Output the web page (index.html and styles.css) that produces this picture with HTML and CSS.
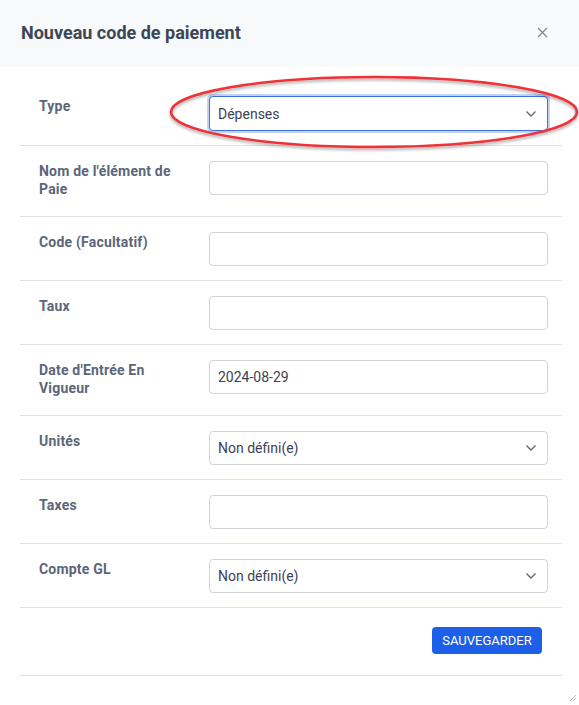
FILE: index.html
```html
<!DOCTYPE html>
<html lang="fr">
<head>
<meta charset="utf-8">
<link rel="stylesheet" href="styles.css">
</head>
<body>
<div class="modal">
  <div class="modal-header">
    <h1 class="title">Nouveau code de paiement</h1>
    <span class="close">
      <svg width="11" height="11" viewBox="0 0 11 11"><path d="M1 1L10 10M10 1L1 10" stroke="#7d8794" stroke-width="1.2" fill="none"/></svg>
    </span>
  </div>
  <div class="modal-body">
    <div class="row">
      <div class="label">Type</div>
      <div class="field select focused"><span>Dépenses</span><svg class="chev" width="12" height="8" viewBox="0 0 12 8"><path d="M1.5 1.5L6 6L10.5 1.5" stroke="#5f6b7a" stroke-width="1.4" fill="none"/></svg></div>
    </div>
    <div class="row">
      <div class="label">Nom de l'élément de Paie</div>
      <div class="field"></div>
    </div>
    <div class="row">
      <div class="label">Code (Facultatif)</div>
      <div class="field"></div>
    </div>
    <div class="row">
      <div class="label">Taux</div>
      <div class="field"></div>
    </div>
    <div class="row">
      <div class="label">Date d'Entrée En Vigueur</div>
      <div class="field"><span>2024-08-29</span></div>
    </div>
    <div class="row">
      <div class="label">Unités</div>
      <div class="field select"><span>Non défini(e)</span><svg class="chev" width="12" height="8" viewBox="0 0 12 8"><path d="M1.5 1.5L6 6L10.5 1.5" stroke="#5f6b7a" stroke-width="1.4" fill="none"/></svg></div>
    </div>
    <div class="row">
      <div class="label">Taxes</div>
      <div class="field"></div>
    </div>
    <div class="row">
      <div class="label">Compte GL</div>
      <div class="field select"><span>Non défini(e)</span><svg class="chev" width="12" height="8" viewBox="0 0 12 8"><path d="M1.5 1.5L6 6L10.5 1.5" stroke="#5f6b7a" stroke-width="1.4" fill="none"/></svg></div>
    </div>
    <div class="footer-row">
      <button class="btn">SAUVEGARDER</button>
    </div>
  </div>
  <svg class="annot" width="420" height="84" viewBox="0 0 420 84">
    <defs>
      <filter id="sh" x="-10%" y="-30%" width="120%" height="160%">
        <feDropShadow dx="0" dy="2" stdDeviation="1.6" flood-color="#000" flood-opacity="0.35"/>
      </filter>
    </defs>
    <ellipse cx="208" cy="38" rx="203" ry="35" fill="none" stroke="#ee3338" stroke-width="2.6" filter="url(#sh)"/>
  </svg>
  <svg class="grip" width="8" height="8" viewBox="0 0 8 8"><path d="M7 1L1 7M7 4L4 7" stroke="#b8b8b8" stroke-width="1"/></svg>
</div>
</body>
</html>
```
FILE: styles.css
```css
* { box-sizing: border-box; }
html, body { margin: 0; padding: 0; background: #fff; }
body { font-family: Roboto, "Liberation Sans", Arial, sans-serif; }
.modal { position: relative; width: 579px; height: 705px; background: #fff; }
.modal-header {
  height: 67px;
  background: #f8f9fb;
  display: flex;
  align-items: center;
  justify-content: space-between;
  padding: 0 31px 0 21px;
}
.title { margin: 0; font-size: 18px; font-weight: 700; color: #3c4656; padding-bottom: 2px; }
.close { display: flex; margin-top: -2px; }
.modal-body { padding: 14px 17px 0 20px; }
.row {
  display: flex;
  align-items: flex-start;
  padding: 15px 14px 14px 19px;
  border-bottom: 1px solid #dfe1e5;
}
.label {
  width: 170px;
  flex: none;
  font-size: 14px;
  font-weight: 700;
  line-height: 18px;
  letter-spacing: 0.2px;
  color: #5c6679;
  margin-bottom: 4px;
  padding-right: 16px;
  padding-top: 1px;
}
.field {
  flex: 1;
  height: 34px;
  border: 1px solid #cfd3da;
  border-radius: 4px;
  display: flex;
  align-items: center;
  justify-content: space-between;
  padding: 0 9px 0 8px;
  font-size: 14px;
  color: #3b4350;
  background: #fff;
}
.field.focused { border-color: #3f6fdc; box-shadow: 0 0 0 2px rgba(80, 130, 230, 0.35); height: 35px; }
.chev { margin-right: 1px; }
.footer-row {
  display: flex;
  justify-content: flex-end;
  padding: 19px 20px 21px 0;
  border-bottom: 1px solid #dfe1e5;
}
.btn {
  height: 27px;
  width: 110px;
  border: none;
  border-radius: 4px;
  background: #1d5fe9;
  color: #fff;
  font-family: Roboto, "Liberation Sans", Arial, sans-serif;
  font-size: 13px;
  font-weight: 400;
  padding: 0;
}
.annot { position: absolute; left: 166px; top: 74px; pointer-events: none; }
.grip { position: absolute; right: 2px; bottom: 3px; }
```
